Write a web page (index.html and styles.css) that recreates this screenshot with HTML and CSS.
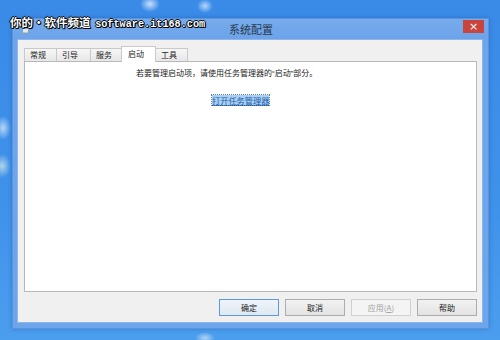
FILE: index.html
```html
<!DOCTYPE html>
<html lang="zh-CN">
<head>
  <meta charset="UTF-8" />
  <title>系统配置</title>
  <link rel="stylesheet" href="styles.css">
</head>
<body>
  <div class="watermark"><span class="wm-cn">你的·软件频道</span> <span class="wm-url">software.it168.com</span></div>

  <div class="window">
    <div class="titlebar">
      <div class="tb-left">
        <svg class="app-icon" width="7" height="7" viewBox="0 0 7 7">
          <rect x="0.5" y="0.5" width="6" height="4.5" fill="#dfe9f5" stroke="#8aa0b8" stroke-width="1"/>
          <rect x="2" y="5.5" width="3" height="1.5" fill="#8aa0b8"/>
        </svg>
      </div>
      <div class="title">系统配置</div>
      <div class="tb-right">
        <div class="close-btn">×</div>
      </div>
    </div>

    <div class="client">
      <div class="tabs">
        <div class="tab" style="width:33px">常规</div>
        <div class="tab" style="width:35px">引导</div>
        <div class="tab" style="width:32px">服务</div>
        <div class="tab active" style="width:35px">启动</div>
        <div class="tab" style="width:33px">工具</div>
      </div>
      <div class="panel">
        <p class="info">若要管理启动项，请使用任务管理器的“启动”部分。</p>
        <a class="tm-link" href="#">打开任务管理器</a>
      </div>
      <div class="buttons">
        <button class="btn default">确定</button>
        <button class="btn">取消</button>
        <button class="btn disabled">应用(<u>A</u>)</button>
        <button class="btn">帮助</button>
      </div>
    </div>
  </div>
</body>
</html>
```

FILE: styles.css
```css
body {
  margin: 0;
  width: 500px;
  height: 340px;
  overflow: hidden;
  position: relative;
  font-family: "Noto Sans CJK SC", "Noto Sans", sans-serif;
  background-color: #3a8de8;
  background-image:
    radial-gradient(ellipse 8px 12px at 3px 128px, rgba(235,245,250,0.7), rgba(235,245,250,0) 100%),
    radial-gradient(ellipse 9px 12px at 2px 166px, rgba(225,240,235,0.7), rgba(225,240,235,0) 100%),
    radial-gradient(ellipse 10px 8px at 150px 4px, rgba(235,245,255,0.8), rgba(235,245,255,0) 100%),
    radial-gradient(ellipse 8px 7px at 205px 6px, rgba(235,245,255,0.7), rgba(235,245,255,0) 100%),
    radial-gradient(ellipse 10px 6px at 205px 338px, rgba(200,225,250,0.8), rgba(200,225,250,0) 100%),
    linear-gradient(180deg, #3a8ae8 0%, #3f92ea 60%, #4b9eee 100%);
}
.watermark {
  position: absolute;
  left: 10px;
  top: 8px;
  color: #fff;
  font-weight: bold;
  white-space: nowrap;
  text-shadow: 1px 0 0 #000, -1px 0 0 #000, 0 1px 0 #000, 0 -1px 0 #000, 1px 1px 0 #000;
  z-index: 2;
}
.wm-cn {
  font-size: 11.5px;
}
.wm-url {
  font-family: "Liberation Mono", monospace;
  font-size: 10.2px;
  margin-left: 1px;
}
.window {
  position: absolute;
  left: 12px;
  top: 18px;
  width: 466px;
  height: 304px;
  border: 1px solid #5b93dc;
  background: #6ea5ea;
  display: flex;
  flex-direction: column;
  padding: 0 5px 5px 4px;
  box-shadow: 0 0 4px rgba(20,60,130,0.35);
}
.titlebar {
  height: 20px;
  display: grid;
  grid-template-columns: 1fr auto 1fr;
  align-items: center;
  background: linear-gradient(180deg, #76abec, #6ca3e9);
  margin: 0 -5px 0 -4px;
  padding: 0 4px 0 5px;
}
.tb-left {
  display: flex;
  align-items: center;
  padding-left: 4px;
  padding-top: 4px;
}
.title {
  font-size: 11px;
  color: #2a3a4c;
}
.tb-right {
  display: flex;
  justify-content: flex-end;
  align-self: start;
  padding-top: 1px;
}
.close-btn {
  width: 21px;
  height: 13px;
  background: #c8453d;
  color: #fff;
  font-family: "DejaVu Sans", sans-serif;
  font-size: 11px;
  line-height: 13px;
  text-align: center;
}
.client {
  flex: 1;
  background: #f0f0f0;
  display: flex;
  flex-direction: column;
  padding: 6px 5px 6px 6px;
  border: 1px solid #8db7ec;
}
.tabs {
  display: flex;
  align-items: flex-end;
  height: 15px;
  position: relative;
  z-index: 1;
}
.tab {
  height: 13px;
  box-sizing: border-box;
  border: 1px solid #c9c9c9;
  border-bottom: none;
  margin-right: -1px;
  background: linear-gradient(180deg, #f6f6f6, #e7e7e7);
  font-size: 8px;
  line-height: 12px;
  color: #222;
  padding-left: 5px;
}
.tab.active {
  height: 16px;
  background: #fff;
  margin-bottom: -1px;
  padding-top: 1px;
  padding-left: 6px;
}
.panel {
  flex: 1;
  background: #fff;
  border: 1px solid #b8b8b8;
  display: flex;
  flex-direction: column;
  align-items: flex-start;
}
.info {
  margin: 6px 0 0 111px;
  font-family: "Liberation Sans", "Noto Sans CJK SC", sans-serif;
  font-size: 8px;
  color: #222;
  line-height: 12px;
  white-space: nowrap;
}
.tm-link {
  margin: 15px 0 0 187px;
  font-size: 8.2px;
  line-height: 10px;
  color: #1e5dab;
  background: #a9cff3;
  text-decoration: underline;
  outline: 1px dotted #5a84b8;
}
.buttons {
  display: flex;
  justify-content: flex-end;
  gap: 6px;
  margin-top: 7px;
}
.btn {
  width: 60px;
  height: 17px;
  padding: 0;
  border: 1px solid #adadad;
  background: linear-gradient(180deg, #f2f2f2, #e3e3e3);
  font-family: "Noto Sans CJK SC", sans-serif;
  font-size: 8px;
  color: #222;
}
.btn.default {
  border-color: #5d9bd8;
  background: linear-gradient(180deg, #eef4fa, #dfe8f1);
}
.btn.disabled {
  color: #a0a0a0;
  border-color: #d0d0d0;
  background: #f4f4f4;
}
```
